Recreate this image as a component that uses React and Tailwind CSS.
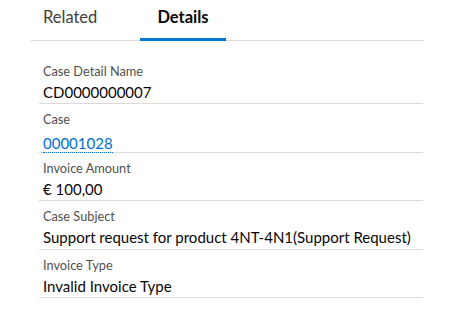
import React from 'react';

const fields = [
  { label: 'Case Detail Name', value: 'CD0000000007', h: 'h-[48px]' },
  { label: 'Case', value: '00001028', link: true, h: 'h-[49px]' },
  { label: 'Invoice Amount', value: '€ 100,00', h: 'h-[48px]' },
  { label: 'Case Subject', value: 'Support request for product 4NT-4N1(Support Request)', h: 'h-[49px]' },
  { label: 'Invoice Type', value: 'Invalid Invoice Type', h: 'h-[48px]' },
];

export default function App() {
  return (
    <div className="w-[454px] h-[315px] bg-white pl-[31px] pr-[30px]" style={{ fontFamily: 'Lato, "Noto Sans", sans-serif' }}>
      {/* Tabs */}
      <div className="flex h-[41px] border-b border-[#dddbda]">
        <div className="w-[109px] pl-[12px] pt-[7px] text-[16.5px] leading-[20px] text-[#3e3e3c] cursor-pointer">
          Related
        </div>
        <div className="relative w-[86px] pt-[7px] text-center text-[16.5px] leading-[20px] font-bold text-[#080707] cursor-pointer">
          Details
          <span className="absolute left-0 right-0 bottom-[-1px] h-[3px] bg-[#0176d3]" />
        </div>
      </div>

      {/* Fields */}
      <div className="pl-[8px] pr-[1px] pt-[15px]">
        {fields.map((f) => (
          <div key={f.label} className={`${f.h} border-b border-[#dddbda] px-[4px] pt-[6px]`}>
            <div className="text-[12.75px] leading-[18px] text-[#514f4d]">{f.label}</div>
            <div className="mt-[3px]">
              {f.link ? (
                <a className="inline-block text-[15px] leading-[18px] text-[#0070d2] border-b border-dotted border-[#0070d2]">
                  {f.value}
                </a>
              ) : (
                <div className="text-[15px] leading-[18px] text-[#080707] whitespace-nowrap">{f.value}</div>
              )}
            </div>
          </div>
        ))}
      </div>
    </div>
  );
}
